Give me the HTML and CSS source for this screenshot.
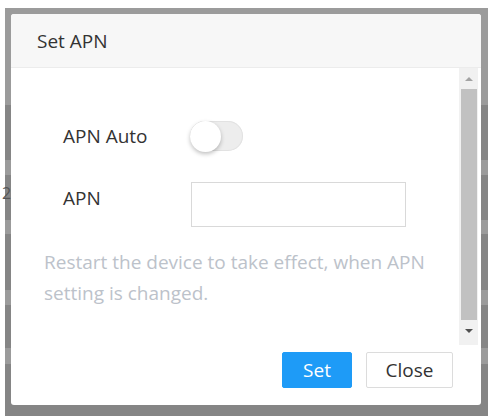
FILE: index.html
```html
<!DOCTYPE html>
<html>
<head>
<meta charset="utf-8">
<link rel="stylesheet" href="styles.css">
</head>
<body>
<div class="page">
  <div class="overlay">
    <span class="bg-digit">2</span>
    <div class="dialog">
      <div class="dlg-header">Set APN</div>
      <div class="dlg-body">
        <div class="content">
          <div class="form-row row-auto">
            <span class="label">APN Auto</span>
            <span class="switch"><span class="knob"></span></span>
          </div>
          <div class="form-row row-apn">
            <span class="label">APN</span>
            <span class="input"></span>
          </div>
          <p class="hint">Restart the device to take effect, when APN setting is changed.</p>
        </div>
        <div class="scrollbar">
          <span class="arrow up"></span>
          <span class="thumb"></span>
          <span class="arrow down"></span>
        </div>
      </div>
      <div class="dlg-footer">
        <button class="btn primary">Set</button>
        <button class="btn">Close</button>
      </div>
    </div>
  </div>
</div>
</body>
</html>
```

FILE: styles.css
```css
html, body {
  margin: 0;
  padding: 0;
  background: #fff;
}
body {
  width: 491px;
  height: 416px;
  overflow: hidden;
  font-family: "Open Sans", "Noto Sans", "Liberation Sans", sans-serif;
}
.page {
  padding: 8px 3px 0 5px;
}
.overlay {
  position: relative;
  height: 408px;
  padding: 6px 7px 0 6px;
  box-sizing: border-box;
  background:
    linear-gradient(to bottom,
      #9b9b9b 0, #9b9b9b 97px,
      #858585 97px, #858585 152px,
      #9b9b9b 152px, #9b9b9b 167px,
      #858585 167px, #858585 212px,
      #9b9b9b 212px, #9b9b9b 226px,
      #858585 226px, #858585 282px,
      #9b9b9b 282px, #9b9b9b 297px,
      #858585 297px, #858585 340px,
      #9b9b9b 340px, #9b9b9b 356px,
      #858585 356px, #858585 408px);
}
.bg-digit {
  position: absolute;
  left: -3px;
  top: 174px;
  font-size: 16px;
  color: #555;
}
.dialog {
  position: relative;
  width: 470px;
  height: 391px;
  background: #fff;
  border-radius: 3px;
  display: flex;
  flex-direction: column;
  overflow: hidden;
}
.dlg-header {
  height: 54px;
  box-sizing: border-box;
  padding: 14px 0 0 26px;
  font-size: 19px;
  color: #333;
  background: #f7f7f7;
  border-bottom: 1px solid #ececec;
  flex: none;
}
.dlg-body {
  display: flex;
  height: 277px;
  flex: none;
}
.content {
  flex: 1;
  padding: 0 0 0 33px;
}
.form-row {
  display: flex;
  align-items: center;
  padding-left: 19px;
}
.label {
  width: 127px;
  font-size: 19px;
  color: #333;
}
.row-auto {
  margin-top: 51px;
  height: 34px;
}
.row-apn {
  margin-top: 29px;
  height: 45px;
  align-items: flex-start;
}
.row-apn .label {
  padding-top: 3px;
}
.switch {
  position: relative;
  width: 53px;
  height: 30px;
  border-radius: 15px;
  background: #ededed;
  box-shadow: inset 0 0 0 1px #e2e2e2;
}
.knob {
  position: absolute;
  left: 0;
  top: 0;
  width: 31px;
  height: 31px;
  border-radius: 50%;
  background: #fff;
  box-shadow: 0 2px 4px rgba(0,0,0,0.25);
}
.input {
  width: 213px;
  height: 43px;
  border: 1px solid #d9d9d9;
  margin-left: 1px;
}
.hint {
  margin: 20px 0 0 0;
  width: 396px;
  font-size: 19px;
  line-height: 31px;
  color: #bcc2ca;
}
.scrollbar {
  width: 19px;
  margin-right: 3px;
  background: #f1f1f1;
  display: flex;
  flex-direction: column;
  align-items: center;
}
.arrow {
  width: 0;
  height: 0;
  border-left: 4px solid transparent;
  border-right: 4px solid transparent;
}
.arrow.up {
  margin-top: 9px;
  border-bottom: 4px solid #a3a3a3;
}
.arrow.down {
  margin-top: 9px;
  border-top: 4px solid #505050;
}
.thumb {
  margin-top: 8px;
  width: 16px;
  height: 231px;
  background: #c1c1c1;
}
.dlg-footer {
  display: flex;
  justify-content: flex-end;
  gap: 14px;
  padding: 7px 28px 0 0;
}
.btn {
  font-family: "Open Sans", "Noto Sans", "Liberation Sans", sans-serif;
  font-size: 19px;
  height: 36px;
  padding: 0;
  border: 1px solid #dcdcdc;
  background: #fff;
  color: #333;
  border-radius: 2px;
  width: 87px;
}
.btn.primary {
  width: 70px;
  background: #1e9bf7;
  border-color: #1e9bf7;
  color: #fff;
}
```
